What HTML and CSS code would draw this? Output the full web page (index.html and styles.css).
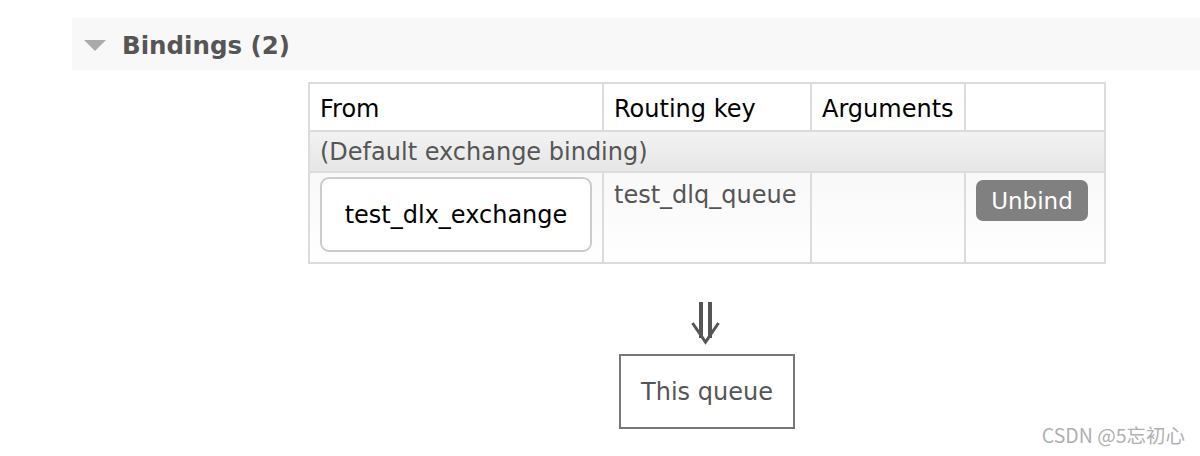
FILE: index.html
```html
<!DOCTYPE html>
<html>
<head>
<meta charset="utf-8">
<link rel="stylesheet" href="styles.css">
</head>
<body>
<div class="page">
  <div class="section-head">
    <span class="tri"></span>
    <h2 class="title">Bindings (2)</h2>
  </div>
  <div class="bindings">
    <table class="tbl">
      <thead>
        <tr>
          <th class="c-from">From</th>
          <th class="c-key">Routing key</th>
          <th class="c-args">Arguments</th>
          <th class="c-act"></th>
        </tr>
      </thead>
      <tbody>
        <tr class="default-row">
          <td colspan="4">(Default exchange binding)</td>
        </tr>
        <tr class="data-row">
          <td class="cell-from"><div class="exch">test_dlx_exchange</div></td>
          <td class="cell-key">test_dlq_queue</td>
          <td></td>
          <td class="cell-act"><button class="unbind">Unbind</button></td>
        </tr>
      </tbody>
    </table>
    <svg class="arrow" width="32" height="44" viewBox="0 0 32 44">
      <rect x="8" y="1" width="4" height="36" fill="#555"/>
      <rect x="17" y="1" width="4" height="36" fill="#555"/>
      <polyline points="1.5,22 14.5,41 27.5,22" fill="none" stroke="#555" stroke-width="3"/>
    </svg>
    <div class="queue-box">This queue</div>
  </div>
  <div class="watermark">CSDN @5忘初心</div>
</div>
</body>
</html>
```

FILE: styles.css
```css
html, body {
  margin: 0;
  padding: 0;
  background: #fff;
}
body {
  font-family: "DejaVu Sans", Verdana, "Noto Sans CJK SC", sans-serif;
  color: #000;
}
.page {
  position: relative;
  width: 1200px;
  height: 456px;
  padding-top: 18px;
  box-sizing: border-box;
}
.section-head {
  margin-left: 72px;
  height: 52px;
  background: #f8f8f8;
  display: flex;
  align-items: center;
}
.tri {
  width: 0;
  height: 0;
  margin-left: 12px;
  margin-top: 2px;
  border-left: 11px solid transparent;
  border-right: 11px solid transparent;
  border-top: 11px solid #aaa;
}
.title {
  margin: 0 0 0 16px;
  font-size: 24.5px;
  font-weight: bold;
  color: #555;
  line-height: 1;
  padding-top: 4px;
}
.bindings {
  margin-left: 308px;
  width: 798px;
  margin-top: 12px;
  display: flex;
  flex-direction: column;
  align-items: center;
}
.tbl {
  width: 798px;
  border-collapse: collapse;
  font-size: 24px;
}
.tbl th, .tbl td {
  border: 2px solid #dcdcdc;
  padding: 0 10px;
  text-align: left;
  vertical-align: middle;
  line-height: 28px;
}
.tbl th {
  font-weight: normal;
  height: 43px;
  color: #000;
  padding-top: 3px;
}
.c-from { width: 272px; }
.c-key { width: 186px; }
.c-args { width: 132px; }
.default-row td {
  height: 39px;
  color: #555;
  background: linear-gradient(#f2f2f2, #e6e6e6);
}
.data-row td {
  height: 81px;
  vertical-align: top;
  background: linear-gradient(#f8f8f8, #fff);
}
.tbl td.cell-from {
  padding: 4px 10px 0 10px;
}
.exch {
  box-sizing: border-box;
  width: 272px;
  height: 75px;
  border: 2px solid #ccc;
  border-radius: 9px;
  background: #fff;
  display: flex;
  align-items: center;
  justify-content: center;
  color: #000;
}
.tbl td.cell-key {
  color: #555;
  padding-top: 8px;
}
.tbl td.cell-act {
  padding-top: 7px;
}
.unbind {
  font-family: inherit;
  font-size: 23px;
  background: #808080;
  color: #fff;
  border: none;
  border-radius: 7px;
  width: 112px;
  height: 41px;
  padding: 0;
  display: block;
}
.arrow {
  margin-top: 37px;
  display: block;
}
.queue-box {
  margin-top: 9px;
  box-sizing: border-box;
  width: 176px;
  height: 75px;
  border: 2px solid #777;
  display: flex;
  align-items: center;
  justify-content: center;
  color: #555;
  font-size: 24px;
}
.watermark {
  position: absolute;
  right: 15px;
  bottom: 7px;
  font-family: "Noto Sans CJK SC", sans-serif;
  font-size: 19.5px;
  color: #b0b0b0;
  text-shadow: 0 0 1px #fff;
}
```
